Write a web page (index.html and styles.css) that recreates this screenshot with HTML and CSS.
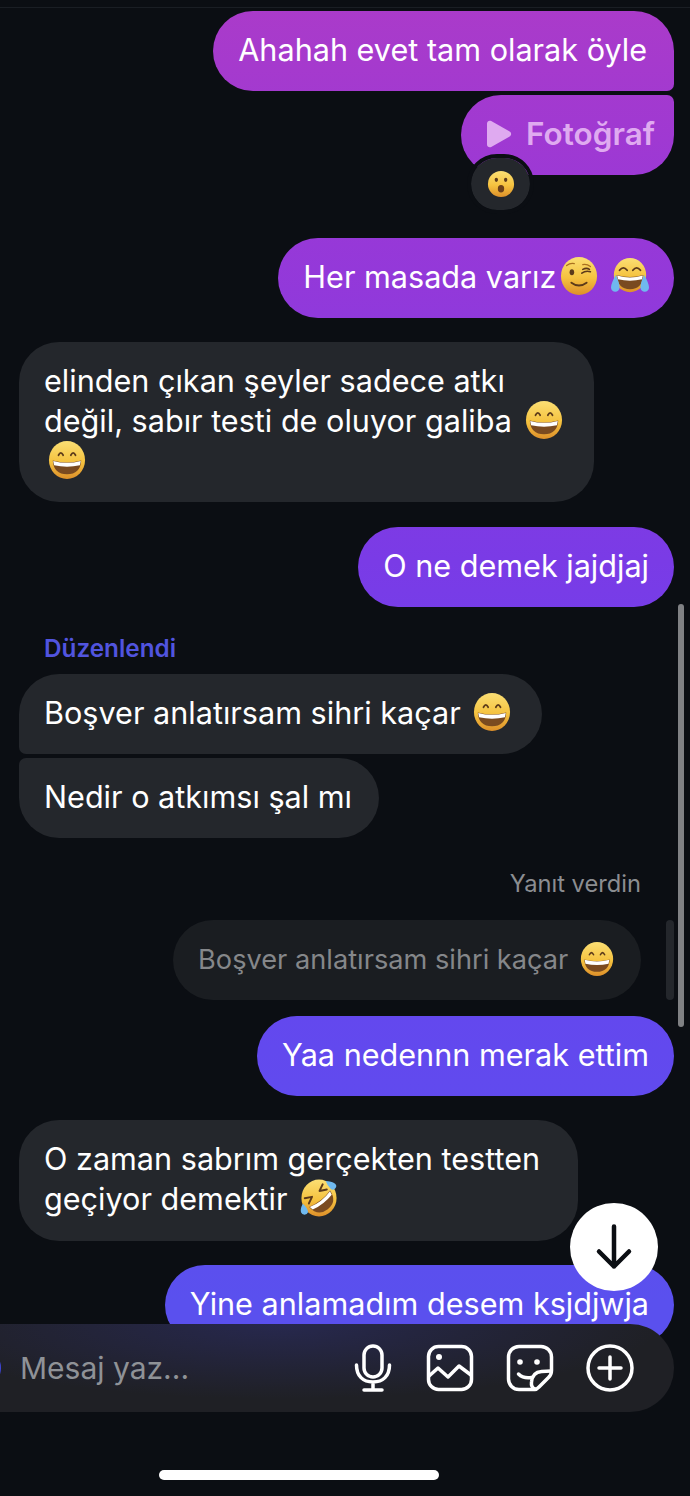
FILE: index.html
```html
<!DOCTYPE html>
<html lang="tr">
<head>
	<meta charset="utf-8">
	<title>Mesajlar</title>
	<link rel="stylesheet" href="styles.css">
</head>
<body>
	<svg class="defs" width="0" height="0" aria-hidden="true">
		<defs>
			<linearGradient id="face" x1="0" y1="0" x2="0" y2="1">
				<stop offset="0" stop-color="#fbdf74"/>
				<stop offset="0.55" stop-color="#f5c23f"/>
				<stop offset="1" stop-color="#dd8f2a"/>
			</linearGradient>
			<symbol id="grin" viewBox="0 0 40 40">
				<ellipse cx="20" cy="20" rx="19" ry="20" fill="url(#face)"/>
				<path d="M11 15q2.500-5 5 0M24 15q2.500-5 5 0" fill="none" stroke="#5c3a1a" stroke-width="1.800" stroke-linecap="round"/>
				<path d="M5 20.500q15 4 30 0q-1 14.500-15 14.500T5 20.500z" fill="#7a4a20"/>
				<path d="M5.500 21q14.500 4 29 0l-.9 4.500q-13.600 3-27.200 0z" fill="#fff"/>
			</symbol>
			<symbol id="wink" viewBox="0 0 40 40">
				<ellipse cx="20" cy="20" rx="19" ry="20" fill="url(#face)"/>
				<ellipse cx="12.500" cy="16" rx="2.400" ry="3.200" fill="#5c3a1a"/>
				<path d="M23 17q4-3 9-1.500M24 13q4-2 7 0" fill="none" stroke="#5c3a1a" stroke-width="1.700" stroke-linecap="round"/>
				<path d="M7 9q4-3 8-2M24 8q4-1 8 2" fill="none" stroke="#a9701f" stroke-width="1.400" stroke-linecap="round"/>
				<path d="M12 27q8 6 16 0" fill="none" stroke="#5c3a1a" stroke-width="2" stroke-linecap="round"/>
			</symbol>
			<symbol id="joy" viewBox="0 0 40 40">
				<ellipse cx="20" cy="19" rx="17" ry="18" fill="url(#face)"/>
				<path d="M9 14q4-5 8 0M23 14q4-5 8 0" fill="none" stroke="#5c3a1a" stroke-width="1.900" stroke-linecap="round"/>
				<path d="M6 19q14 4 28 0q-1 15-14 15T6 19z" fill="#7a4a20"/>
				<path d="M6.500 19.500q13.500 4 27 0l-.8 4q-12.700 3-25.400 0z" fill="#fff"/>
				<path d="M5 19q-5 9-5 13a4.500 4.500 0 0 0 9 0q0-5-4-13zM35 19q5 9 5 13a4.500 4.500 0 0 1-9 0q0-5 4-13z" fill="#6fb9ef"/>
			</symbol>
			<symbol id="rofl" viewBox="0 0 40 40">
				<ellipse cx="20" cy="20" rx="18.500" ry="19.500" fill="url(#face)"/>
				<g transform="rotate(-38 20 20)">
					<path d="M8 11l7 3.500-7 3.500M32 11l-7 3.500 7 3.500" fill="none" stroke="#5c3a1a" stroke-width="2" stroke-linecap="round" stroke-linejoin="round"/>
					<path d="M6 21q14 4 28 0q-1 14-14 14T6 21z" fill="#7a4a20"/>
					<path d="M6.500 21.500q13.500 4 27 0l-.8 4q-12.700 3-25.400 0z" fill="#fff"/>
				</g>
				<path d="M3 26q-3 5-2 9a4 4 0 0 0 7.500 0q0-4-5.500-9zM27 2q6 0 10 3a3.500 3.500 0 0 1-5 5q-3-3-5-8z" fill="#6fb9ef"/>
			</symbol>
			<symbol id="hushed" viewBox="0 0 30 30">
				<circle cx="15" cy="15" r="14" fill="url(#face)"/>
				<ellipse cx="10" cy="10.500" rx="1.800" ry="2.300" fill="#5c3a1a"/>
				<ellipse cx="20" cy="10.500" rx="1.800" ry="2.300" fill="#5c3a1a"/>
				<ellipse cx="15" cy="20" rx="3.400" ry="4" fill="#6b3f1a"/>
			</symbol>
		</defs>
	</svg>

	<main class="chat">
		<div class="top-line"></div>

		<div class="row me first">
			<div class="bubble mine corner-br">Ahahah evet tam olarak öyle</div>
		</div>

		<div class="row me tight">
			<div class="bubble mine corner-tr has-reaction">
				<span class="attachment">
					<svg class="play" viewBox="0 0 26 28"><path d="M1 3.500c0-2.200 2.300-3.500 4.200-2.400l18.500 10.500c1.900 1.100 1.900 3.700 0 4.800L5.200 26.900C3.300 28 1 26.700 1 24.500z" fill="currentColor"/></svg>
					Fotoğraf
				</span>
				<span class="reaction"><svg class="emoji-small"><use href="#hushed"/></svg></span>
			</div>
		</div>

		<div class="row me gap-reaction">
			<div class="bubble mine">Her masada varız<svg class="emoji"><use href="#wink"/></svg> <svg class="emoji"><use href="#joy"/></svg></div>
		</div>

		<div class="row them gap">
			<div class="bubble theirs wide">elinden çıkan şeyler sadece atkı değil, sabır testi de oluyor galiba <svg class="emoji"><use href="#grin"/></svg> <svg class="emoji"><use href="#grin"/></svg></div>
		</div>

		<div class="row me gap-large">
			<div class="bubble mine">O ne demek jajdjaj</div>
		</div>

		<div class="edited">Düzenlendi</div>

		<div class="row them">
			<div class="bubble theirs corner-bl">Boşver anlatırsam sihri kaçar <svg class="emoji"><use href="#grin"/></svg></div>
		</div>

		<div class="row them tight">
			<div class="bubble theirs corner-tl">Nedir o atkımsı şal mı</div>
		</div>

		<div class="reply-label">Yanıt verdin</div>

		<div class="row reply-row">
			<div class="bubble quoted">Boşver anlatırsam sihri kaçar <svg class="emoji emoji-quoted"><use href="#grin"/></svg></div>
		</div>

		<div class="row me gap-small">
			<div class="bubble mine">Yaa nedennn merak ettim</div>
		</div>

		<div class="row them gap">
			<div class="bubble theirs medium">O zaman sabrım gerçekten testten geçiyor demektir <svg class="emoji"><use href="#rofl"/></svg></div>
		</div>

		<div class="row me gap">
			<div class="bubble mine">Yine anlamadım desem ksjdjwja</div>
		</div>
	</main>

	<div class="scrollbar"></div>
	<div class="scrollbar-small"></div>

	<button class="scroll-down" aria-label="Aşağı">
		<svg viewBox="0 0 48 48" width="48" height="48"><path d="M24 3.500v40M9 28.500l15 15 15-15" fill="none" stroke="#0b0e13" stroke-width="4.500" stroke-linecap="round" stroke-linejoin="round"/></svg>
	</button>

	<div class="composer">
		<span class="composer-dot"></span>
		<span class="placeholder">Mesaj yaz...</span>
		<div class="tools">
			<svg class="tool tool-mic" viewBox="0 0 48 48"><rect x="15" y="2" width="18" height="31" rx="9"/><path d="M7.500 21c0 11 6.500 17 16.500 17s16.500-6 16.500-17M24 38v8M15 46h18"/></svg>
			<svg class="tool" viewBox="0 0 48 48"><rect x="2.500" y="2.500" width="43" height="43" rx="10"/><circle class="solid" cx="13" cy="13" r="3"/><path d="M3 32l9-8 10 9 11-11 12 9"/></svg>
			<svg class="tool" viewBox="0 0 48 48"><path d="M29 45.500H13A10.500 10.500 0 0 1 2.500 35V13A10.500 10.500 0 0 1 13 2.500h22A10.500 10.500 0 0 1 45.500 13v13.500c0 3-1 5-3 7L33 43c-1.500 1.500-2.500 2.500-4 2.500z"/><path d="M29 45c-3-1-4-3-3.500-7 .6-6 4-10 10-10.500 3-.3 6.500-.5 9.500-.5"/><path d="M12.500 30c3 3 7 4.500 13 3.500"/><circle class="solid" cx="14" cy="18" r="2.800"/><circle class="solid" cx="31" cy="18" r="2.800"/></svg>
			<svg class="tool" viewBox="0 0 48 48"><circle cx="24" cy="24" r="22"/><path d="M24 13v22M13 24h22"/></svg>
		</div>
	</div>

	<div class="home-bar"></div>
</body>
</html>
```

FILE: styles.css
```css
* {
	box-sizing: border-box;
}

html,
body {
	height: 100%;
}

body {
	position: relative;
	width: 690px;
	height: 1496px;
	margin: 0;
	overflow: hidden;
	background-color: #0b0e13;
	color: #fff;
	font-family: Inter, "Liberation Sans", sans-serif;
	font-size: 30.600px;
	font-weight: 370;
	line-height: 40px;
}

.defs {
	position: absolute;
}

.chat {
	display: flex;
	flex-direction: column;
	padding: 0 16px 0 19px;
}

.top-line {
	height: 1px;
	margin: 7px -19px 0;
	background-color: #1a1e24;
}

.row {
	display: flex;
}

.me {
	justify-content: flex-end;
}

.them {
	justify-content: flex-start;
}

.first {
	margin-top: 3px;
}

.tight {
	margin-top: 4px;
}

.gap {
	margin-top: 24px;
}

.gap-large {
	margin-top: 25px;
}

.gap-small {
	margin-top: 16px;
}

.gap-reaction {
	margin-top: 63px;
}

.bubble {
	position: relative;
	padding: 19px 25px 21px;
	border-radius: 40px;
}

.mine {
	background: linear-gradient(180deg, #ab3bc9 0, #9a38d6 200px, #7a3be6 560px, #6a42ee 800px, #5a50ee 1300px) fixed;
}

.theirs {
	background-color: #24272c;
}

.wide {
	width: 575px;
}

.medium {
	width: 559px;
	padding-bottom: 22px;
}

.corner-br {
	padding-right: 27px;
	border-bottom-right-radius: 7px;
}

.corner-tr {
	border-top-right-radius: 7px;
}

.corner-bl {
	padding-right: 31px;
	border-bottom-left-radius: 7px;
}

.corner-tl {
	padding-right: 27px;
	border-top-left-radius: 7px;
}

.attachment {
	display: flex;
	align-items: center;
	gap: 14px;
	height: 40px;
	margin-right: -6px;
	color: #dfaaf0;
	font-size: 31.500px;
	font-weight: 600;
}

.play {
	width: 26px;
	height: 28px;
}

.reaction {
	position: absolute;
	left: 6px;
	bottom: -39px;
	display: flex;
	align-items: center;
	justify-content: center;
	width: 67px;
	height: 60px;
	border: 4px solid #0b0e13;
	border-radius: 30px;
	background-color: #24272c;
	background-clip: padding-box;
}

.emoji-small {
	width: 28px;
	height: 28px;
}

.emoji {
	width: 38px;
	height: 38px;
	margin-left: 4px;
	vertical-align: -7px;
}

.edited {
	margin: 26px 0 0 25px;
	height: 41px;
	padding-top: 1px;
	color: #5154df;
	font-size: 24.300px;
	font-weight: 600;
	line-height: 28px;
}

.reply-label {
	margin: 26px 33px 0 0;
	height: 56px;
	color: #8b8d91;
	font-size: 23.700px;
	line-height: 40px;
	text-align: right;
}

.reply-row {
	justify-content: flex-end;
	padding-right: 33px;
}

.quoted {
	padding: 20px 27px 20px 25px;
	background-color: #1a1d21;
	color: #85878a;
	font-size: 27.200px;
}

.emoji-quoted {
	width: 34px;
	height: 34px;
}

.scrollbar {
	position: absolute;
	top: 604px;
	right: 6px;
	width: 6px;
	height: 423px;
	border-radius: 3px;
	background-color: #808184;
}

.scrollbar-small {
	position: absolute;
	top: 920px;
	right: 16px;
	width: 8px;
	height: 80px;
	border-radius: 4px;
	background-color: #24272c;
}

.scroll-down {
	position: absolute;
	top: 1203px;
	left: 570px;
	display: flex;
	align-items: center;
	justify-content: center;
	width: 88px;
	height: 88px;
	padding: 0;
	border: none;
	border-radius: 50%;
	background-color: #fff;
}

.composer {
	position: absolute;
	top: 1324px;
	left: -60px;
	display: flex;
	align-items: center;
	width: 734px;
	height: 88px;
	padding-left: 80px;
	border-radius: 44px;
	background: radial-gradient(ellipse 380px 75px at 340px 0, #27284e 0, rgba(39, 40, 78, 0) 100%), #1f2025;
}

.composer-dot {
	position: absolute;
	top: 24px;
	left: 21px;
	width: 40px;
	height: 40px;
	border: 3px solid #3f46d8;
	border-radius: 50%;
}

.placeholder {
	flex: 1;
	color: #8f9297;
	font-size: 30px;
}

.tools {
	display: flex;
	gap: 32px;
	padding-right: 40px;
}

.tool {
	width: 48px;
	height: 48px;
	fill: none;
	stroke: #fff;
	stroke-width: 3.500;
	stroke-linecap: round;
	stroke-linejoin: round;
}

.tool-mic {
	margin-right: -3px;
}

.tool .solid {
	fill: #fff;
	stroke: none;
}

.home-bar {
	position: absolute;
	top: 1470px;
	left: 159px;
	width: 280px;
	height: 10px;
	border-radius: 5px;
	background-color: #fff;
}
```
